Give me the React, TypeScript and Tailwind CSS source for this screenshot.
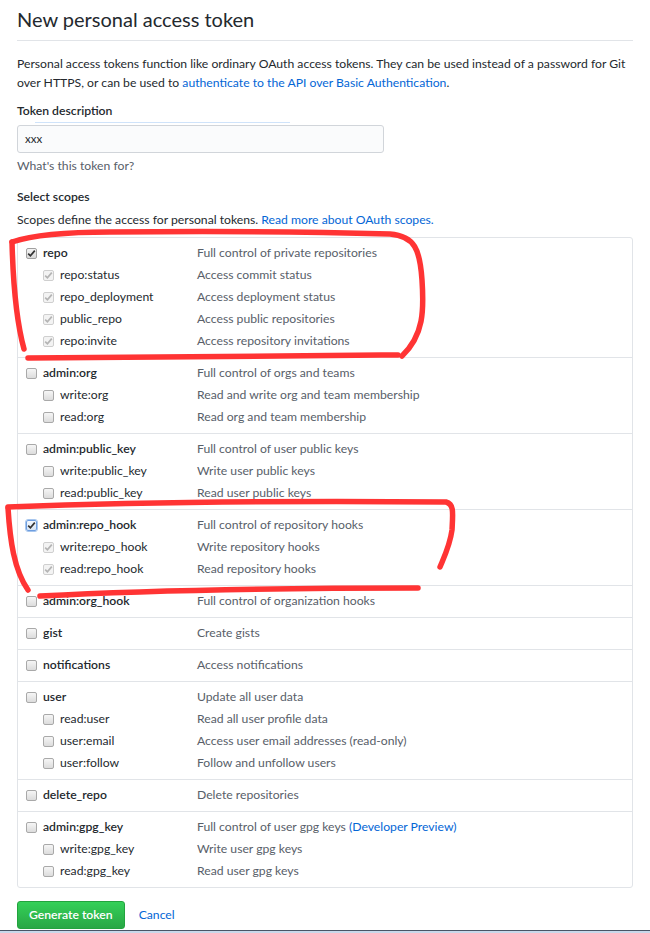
import React from "react";

type BoxState = "off" | "on" | "sub" | "focus";

type Scope = {
  name: string;
  desc: React.ReactNode;
  state: BoxState;
  subs?: { name: string; desc: string; state: BoxState }[];
};

const scopes: Scope[] = [
  {
    name: "repo",
    desc: "Full control of private repositories",
    state: "on",
    subs: [
      { name: "repo:status", desc: "Access commit status", state: "sub" },
      { name: "repo_deployment", desc: "Access deployment status", state: "sub" },
      { name: "public_repo", desc: "Access public repositories", state: "sub" },
      { name: "repo:invite", desc: "Access repository invitations", state: "sub" },
    ],
  },
  {
    name: "admin:org",
    desc: "Full control of orgs and teams",
    state: "off",
    subs: [
      { name: "write:org", desc: "Read and write org and team membership", state: "off" },
      { name: "read:org", desc: "Read org and team membership", state: "off" },
    ],
  },
  {
    name: "admin:public_key",
    desc: "Full control of user public keys",
    state: "off",
    subs: [
      { name: "write:public_key", desc: "Write user public keys", state: "off" },
      { name: "read:public_key", desc: "Read user public keys", state: "off" },
    ],
  },
  {
    name: "admin:repo_hook",
    desc: "Full control of repository hooks",
    state: "focus",
    subs: [
      { name: "write:repo_hook", desc: "Write repository hooks", state: "sub" },
      { name: "read:repo_hook", desc: "Read repository hooks", state: "sub" },
    ],
  },
  { name: "admin:org_hook", desc: "Full control of organization hooks", state: "off" },
  { name: "gist", desc: "Create gists", state: "off" },
  { name: "notifications", desc: "Access notifications", state: "off" },
  {
    name: "user",
    desc: "Update all user data",
    state: "off",
    subs: [
      { name: "read:user", desc: "Read all user profile data", state: "off" },
      { name: "user:email", desc: "Access user email addresses (read-only)", state: "off" },
      { name: "user:follow", desc: "Follow and unfollow users", state: "off" },
    ],
  },
  { name: "delete_repo", desc: "Delete repositories", state: "off" },
  {
    name: "admin:gpg_key",
    desc: (
      <>
        Full control of user gpg keys <span className="text-[#0366d6]">(Developer Preview)</span>
      </>
    ),
    state: "off",
    subs: [
      { name: "write:gpg_key", desc: "Write user gpg keys", state: "off" },
      { name: "read:gpg_key", desc: "Read user gpg keys", state: "off" },
    ],
  },
];

function Checkbox({ state }: { state: BoxState }) {
  if (state === "off") {
    return (
      <span className="block h-[11px] w-[11px] shrink-0 rounded-[2px] border border-[#a9a9a9] bg-gradient-to-b from-[#f6f6f6] to-[#dcdcdc]" />
    );
  }
  const sub = state === "sub";
  const box = sub
    ? "border-[#cfcfcf] bg-[#f3f3f3]"
    : state === "focus"
      ? "border-[#6e9ee0] bg-gradient-to-b from-[#f4f8fd] to-[#d6e4f5] outline outline-1 outline-[#a7c6ee]"
      : "border-[#a0a0a0] bg-gradient-to-b from-[#f4f4f4] to-[#d8d8d8]";
  return (
    <span className={`flex h-[11px] w-[11px] shrink-0 items-center justify-center rounded-[2px] border ${box}`}>
      <svg width="9" height="9" viewBox="0 0 9 9">
        <path
          d="M1.2 4.6 L3.4 6.8 L7.8 1.6"
          fill="none"
          stroke={sub ? "#b4b4b4" : "#333"}
          strokeWidth="1.7"
        />
      </svg>
    </span>
  );
}

function Row({ name, desc, state, sub }: { name: string; desc: React.ReactNode; state: BoxState; sub?: boolean }) {
  return (
    <div className="flex h-[22px] items-center">
      <div className={`flex w-[179px] shrink-0 items-center gap-[6px] ${sub ? "pl-[25px]" : "pl-[8px]"}`}>
        <span className="mt-[1px]">
          <Checkbox state={state} />
        </span>
        <span className={sub ? "text-[#24292e]" : "font-semibold text-[#24292e]"}>{name}</span>
      </div>
      <div className="text-[#586069]">{desc}</div>
    </div>
  );
}

function Annotations() {
  return (
    <svg className="pointer-events-none absolute left-0 top-0" width="650" height="933" viewBox="0 0 650 933">
      <g fill="none" stroke="#ff3434" strokeWidth="5.5" strokeLinecap="round" strokeLinejoin="round">
        <path d="M12 242 C30 236 60 232 110 232 C200 231 320 232 390 234 C415 236 420 250 422 280 C424 310 424 335 402 356" />
        <path d="M12 242 C13 280 16 320 24 349" />
        <path d="M28 358 C120 357 260 356 398 355" />
        <path d="M8 507 C140 502 320 501 446 502 C454 504 453 512 452 530 C450 545 445 555 440 567" />
        <path d="M8 508 C10 540 14 570 28 590" />
        <path d="M40 596 C150 590 300 588 418 588" />
      </g>
    </svg>
  );
}

export default function App() {
  return (
    <div
      className="relative h-[933px] w-[650px] overflow-hidden bg-white text-[12.2px] text-[#24292e]"
      style={{ fontFamily: 'Lato, "Open Sans", sans-serif' }}>
      <div className="px-[17px]">
        <h1 className="border-b border-[#e1e4e8] pb-[6px] pt-[4px] text-[20px] font-normal leading-[30px]">
          New personal access token
        </h1>
        <p className="mt-[13px] leading-[19px]">
          Personal access tokens function like ordinary OAuth access tokens. They can be used instead of a password for Git
          over HTTPS, or can be used to{" "}
          <span className="text-[#0366d6]">authenticate to the API over Basic Authentication</span>.
        </p>
        <div className="mt-[10px] font-semibold leading-[18px]">Token description</div>
        <div className="ml-[18px] mt-[2px] h-px w-[255px] bg-[#cfe3fa]" />
        <div className="mt-[2px] flex h-[28px] w-[367px] items-center rounded-[3px] border border-[#d1d5da] bg-[#fafbfc] px-[7px] text-[11.5px]">
          xxx
        </div>
        <div className="mt-[4px] leading-[18px] text-[#586069]">What's this token for?</div>
        <div className="mt-[13px] font-semibold leading-[18px]">Select scopes</div>
        <div className="mt-[5px] leading-[18px]">
          Scopes define the access for personal tokens.{" "}
          <span className="text-[#0366d6]">Read more about OAuth scopes.</span>
        </div>
        <div className="mt-[8px] rounded-[3px] border border-[#e1e4e8]">
          {scopes.map((s, i) => (
            <div
              key={s.name}
              className={`pb-[5px] pt-[4px] ${i < scopes.length - 1 ? "border-b border-[#e1e4e8]" : ""}`}>
              <Row name={s.name} desc={s.desc} state={s.state} />
              {s.subs?.map((c) => (
                <Row key={c.name} name={c.name} desc={c.desc} state={c.state} sub />
              ))}
            </div>
          ))}
        </div>
        <div className="mt-[13px] flex items-center gap-[14px]">
          <button className="h-[28px] rounded-[3px] border border-[#22a33e] bg-gradient-to-b from-[#34d058] to-[#28a745] px-[11px] font-semibold text-white">
            Generate token
          </button>
          <span className="text-[#0366d6]">Cancel</span>
        </div>
      </div>
      <div className="absolute bottom-0 left-0 right-0 h-[3px] border-t border-[#4a5566] bg-[#c9d8ea]" />
      <Annotations />
    </div>
  );
}
